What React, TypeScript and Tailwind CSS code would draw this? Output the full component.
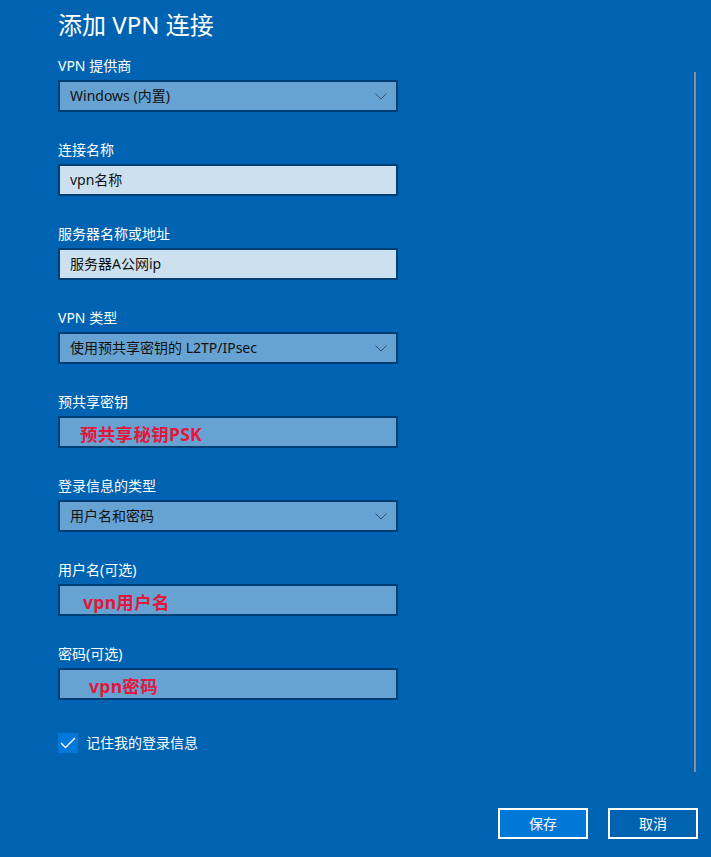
import React from 'react';

type Field = {
  label: string;
  value: string;
  kind: 'select' | 'text' | 'note';
  indent?: string;
};

const fields: Field[] = [
  { label: 'VPN 提供商', value: 'Windows (内置)', kind: 'select' },
  { label: '连接名称', value: 'vpn名称', kind: 'text' },
  { label: '服务器名称或地址', value: '服务器A公网ip', kind: 'text' },
  { label: 'VPN 类型', value: '使用预共享密钥的 L2TP/IPsec', kind: 'select' },
  { label: '预共享密钥', value: '预共享秘钥PSK', kind: 'note', indent: 'pl-[10px]' },
  { label: '登录信息的类型', value: '用户名和密码', kind: 'select' },
  { label: '用户名(可选)', value: 'vpn用户名', kind: 'note', indent: 'pl-[13px]' },
  { label: '密码(可选)', value: 'vpn密码', kind: 'note', indent: 'pl-[19px]' },
];

const Chevron = () => (
  <svg width="12" height="7" viewBox="0 0 12 7" className="shrink-0">
    <polyline points="0.5,0.5 6,6 11.5,0.5" fill="none" stroke="#2f4f6e" strokeWidth="1" />
  </svg>
);

const FormField: React.FC<{ field: Field }> = ({ field }) => {
  const fill = field.kind === 'text' ? 'bg-[#cce0f0]' : 'bg-[#66a3d2]';
  return (
    <div className="flex flex-col">
      <label className="text-[14px] leading-5 text-white mb-1">{field.label}</label>
      <div
        className={`w-[340px] h-8 border-2 border-[#003f73] ${fill} flex items-center justify-between pl-[10px] pr-[9px]`}
      >
        {field.kind === 'note' ? (
          <span
            className={`${field.indent} pt-[3px] text-[17.5px] font-bold leading-5 tracking-[0.3px] text-[#e3173c]`}
          >
            {field.value}
          </span>
        ) : (
          <span className="text-[14px] leading-5 text-[#111]">{field.value}</span>
        )}
        {field.kind === 'select' && <Chevron />}
      </div>
    </div>
  );
};

export default function App() {
  return (
    <div
      className="w-full h-screen min-h-[857px] bg-[#0063b1] flex flex-col"
      style={{ fontFamily: '"Noto Sans", "Noto Sans CJK SC", sans-serif' }}
    >
      <div className="flex flex-1">
        <div className="flex-1 pl-[58px] pt-[9px]">
          <h1 className="text-[24px] leading-8 text-white font-normal">添加 VPN 连接</h1>

          <div className="mt-[15px] flex flex-col gap-7">
            {fields.map((f) => (
              <FormField key={f.label} field={f} />
            ))}
          </div>

          <div className="mt-[33px] flex items-center gap-2">
            <div className="w-5 h-5 bg-[#0078d7] flex items-center justify-center">
              <svg width="16" height="12" viewBox="0 0 16 12">
                <polyline points="1,6 5.5,10.5 15,1" fill="none" stroke="#fff" strokeWidth="1.4" />
              </svg>
            </div>
            <span className="text-[14px] leading-5 text-white">记住我的登录信息</span>
          </div>
        </div>

        {/* scroll thumb */}
        <div className="w-[2px] h-[700px] mt-[72px] mr-[15px] bg-[#8a8f96]" />
      </div>

      <div className="flex justify-end gap-5 pr-[13px] pb-[18px]">
        <button className="w-[90px] h-[31px] border-2 border-white bg-[#0078d7] text-white text-[14px]">
          保存
        </button>
        <button className="w-[90px] h-[31px] border-2 border-white bg-[#0063b1] text-white text-[14px]">
          取消
        </button>
      </div>
    </div>
  );
}
